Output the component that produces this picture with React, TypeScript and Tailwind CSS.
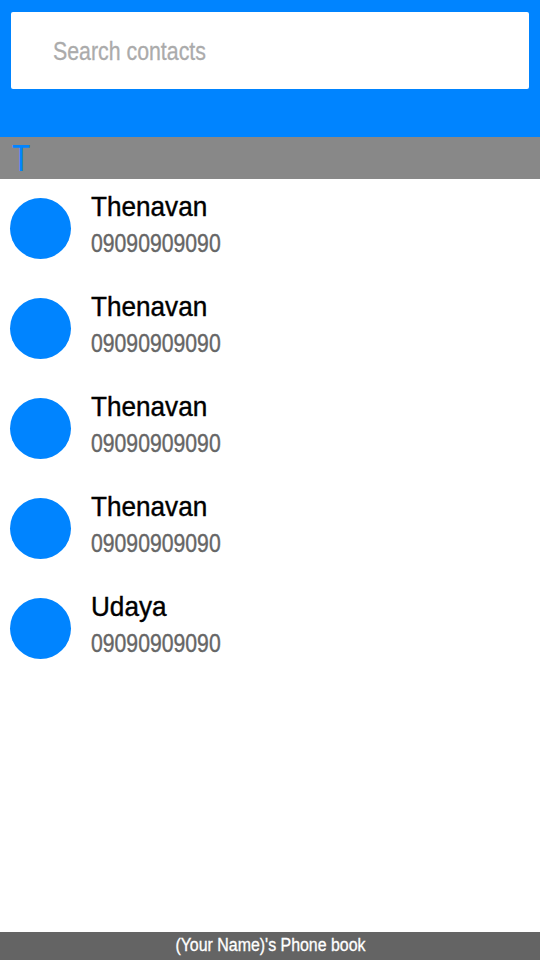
const contacts = [
  { name: "Thenavan", phone: "09090909090" },
  { name: "Thenavan", phone: "09090909090" },
  { name: "Thenavan", phone: "09090909090" },
  { name: "Thenavan", phone: "09090909090" },
  { name: "Udaya", phone: "09090909090" },
];

const font = { fontFamily: '"Liberation Sans", Arial, sans-serif' };

export default function App() {
  return (
    <div className="flex h-[960px] w-[540px] flex-col bg-white" style={font}>
      <header className="h-[137px] bg-[#0084ff] px-[11px] pt-[12px]">
        {/* search field, placeholder drawn as text so it can be narrowed like the original */}
        <label className="flex h-[77px] w-full items-center rounded-[2px] bg-white pl-[42px]">
          <span className="inline-block origin-left text-[26px] leading-none text-[#ababab] [transform:scaleX(0.82)] [-webkit-text-stroke:0.3px_#ababab]">
            Search contacts
          </span>
        </label>
      </header>

      <div className="flex h-[42px] items-center bg-[#888888] px-[12px]">
        <span className="inline-block origin-left text-[37px] leading-none text-[#0084ff] [transform:scaleX(0.8)]">T</span>
      </div>

      <ul className="flex-1">
        {contacts.map((c, i) => (
          <li key={i} className="flex h-[100px] items-start px-[10px] pt-[19px]">
            <div className="h-[61px] w-[61px] shrink-0 rounded-full bg-[#0084ff]" />
            <div className="ml-[20px] mt-[-7px] flex flex-col items-start">
              <span className="inline-block origin-left text-[27.5px] leading-[32px] text-black [transform:scaleX(0.95)] [-webkit-text-stroke:0.4px_#000]">
                {c.name}
              </span>
              <span className="mt-[6px] inline-block origin-left text-[26.5px] leading-[28px] text-[#666666] [transform:scaleX(0.8)] [-webkit-text-stroke:0.4px_#666666]">
                {c.phone}
              </span>
            </div>
          </li>
        ))}
      </ul>

      <footer className="flex h-[28px] items-center justify-center bg-[#646464]">
        <span className="inline-block text-[17.5px] leading-none text-white [transform:scaleX(0.91)] [-webkit-text-stroke:0.3px_#fff]">
          (Your Name)'s Phone book
        </span>
      </footer>
    </div>
  );
}
